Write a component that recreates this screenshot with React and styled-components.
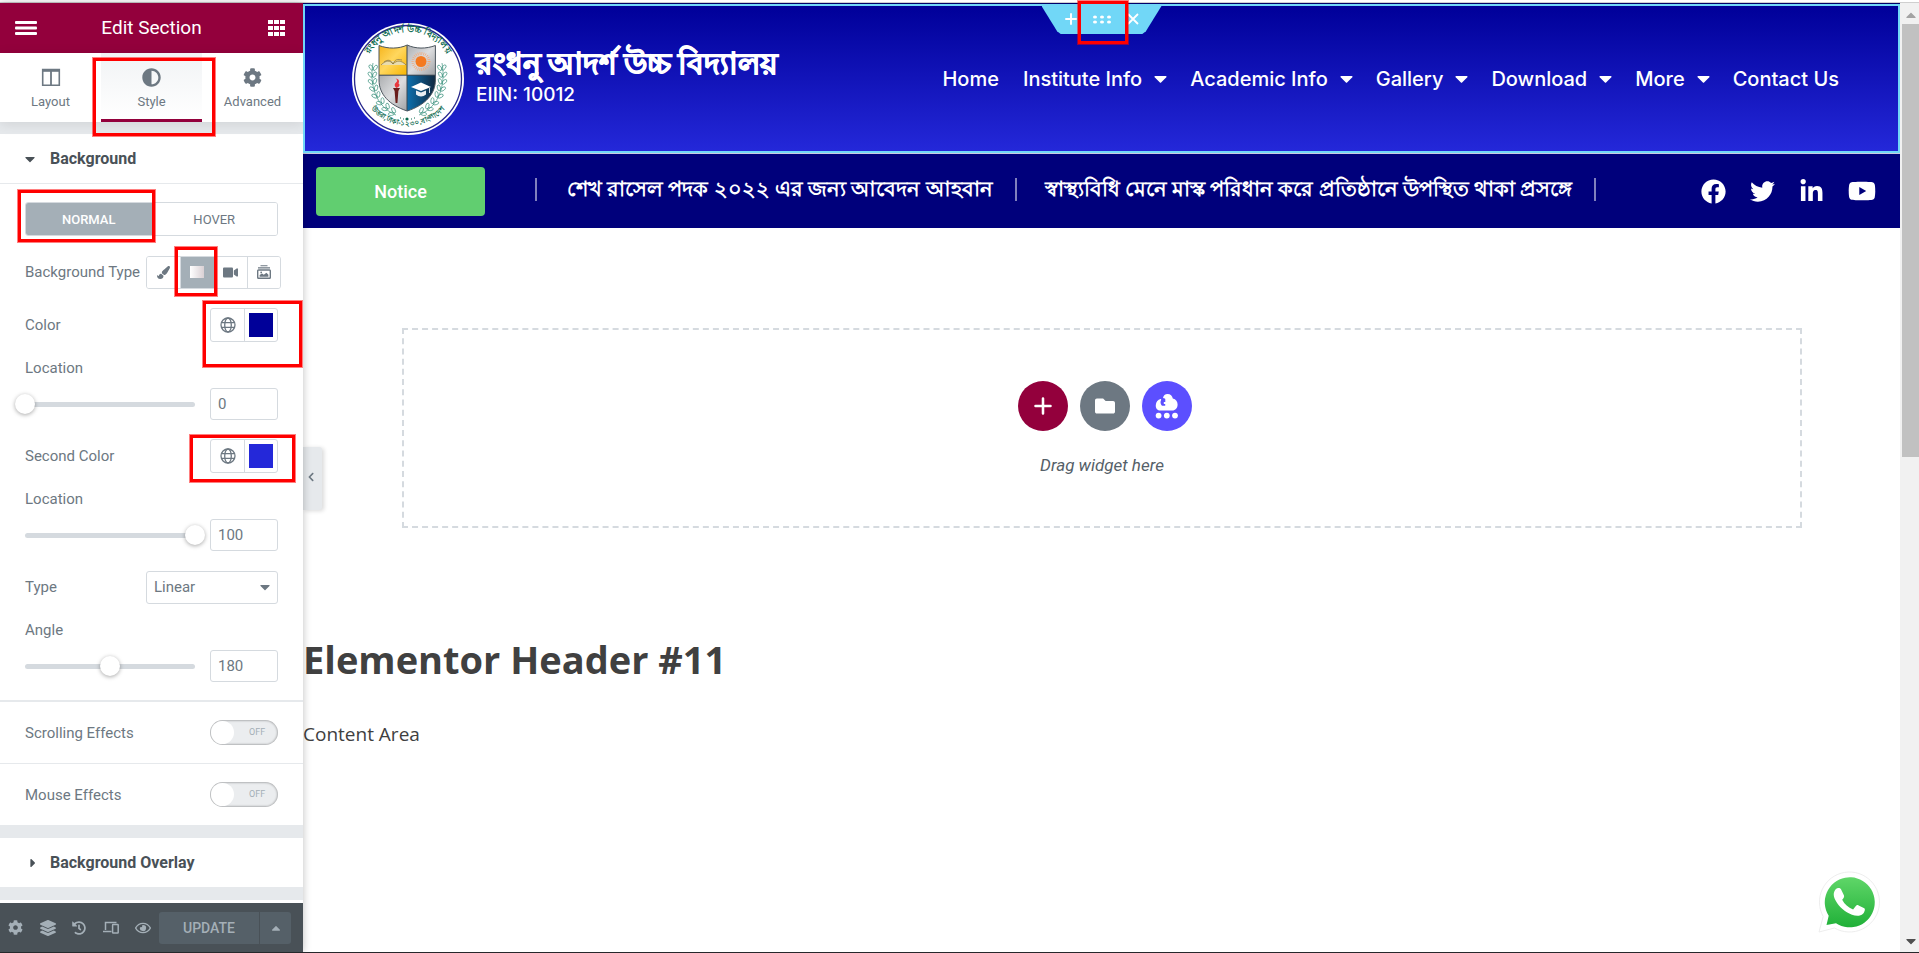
import React, { useState } from 'react'
import styled, { createGlobalStyle } from 'styled-components'
import {
    FaCog, FaAdjust, FaPaintBrush, FaVideo, FaLayerGroup, FaHistory, FaRegEye,
    FaCaretDown, FaCaretUp, FaCaretRight, FaFacebook, FaTwitter, FaLinkedinIn, FaYoutube,
    FaFolder, FaChevronLeft
} from 'react-icons/fa'

const NAV_ITEMS = [
    { label: 'Home' },
    { label: 'Institute Info', menu: true },
    { label: 'Academic Info', menu: true },
    { label: 'Gallery', menu: true },
    { label: 'Download', menu: true },
    { label: 'More', menu: true },
    { label: 'Contact Us' }
]

const HIGHLIGHTS = [
    { x: 93, y: 58, w: 122, h: 78 },
    { x: 18, y: 190, w: 137, h: 52 },
    { x: 175, y: 247, w: 42, h: 49 },
    { x: 203, y: 301, w: 99, h: 66 },
    { x: 190, y: 435, w: 105, h: 47 }
]

const MenuIcon = () => (
    <svg width="22" height="14" viewBox="0 0 22 14" fill="currentColor">
        {[0, 5.5, 11].map(y => <rect key={y} y={y} width="22" height="3" rx="1" />)}
    </svg>
)

const PlusIcon = ({ size, stroke }) => (
    <svg width={size} height={size} viewBox="0 0 12 12" fill="none" stroke="currentColor" strokeWidth={stroke} strokeLinecap="round">
        <path d="M6 1v10M1 6h10" />
    </svg>
)

const CloseIcon = () => (
    <svg width="12" height="12" viewBox="0 0 12 12" fill="none" stroke="currentColor" strokeWidth="1.8">
        <path d="m1 1 10 10M11 1 1 11" />
    </svg>
)

const ColumnsIcon = () => (
    <svg width="20" height="19" viewBox="0 0 20 19" fill="none" stroke="currentColor">
        <path d="M1.7 1.5h16.6v15.8H1.7z" strokeWidth="1.6" />
        <path d="M1 2.4h18" strokeWidth="2.8" />
        <path d="M10 3v14" strokeWidth="1.8" />
    </svg>
)

const AppsIcon = () => (
    <svg width="18" height="16" viewBox="0 0 18 16" fill="currentColor">
        {[0, 6, 12].map(y => [0, 6, 12].map(x => <rect key={x + '-' + y} x={x} y={y} width="5" height="4" />))}
    </svg>
)

const GlobeIcon = () => (
    <svg width="16" height="16" viewBox="0 0 16 16" fill="none" stroke="currentColor" strokeWidth="1.3">
        <circle cx="8" cy="8" r="7" />
        <ellipse cx="8" cy="8" rx="3.3" ry="7" />
        <path d="M1.6 5.6h12.8M1.6 10.4h12.8" />
    </svg>
)

const SlideshowIcon = () => (
    <svg width="14" height="14" viewBox="0 0 14 14" fill="none" stroke="currentColor" strokeWidth="1.4">
        <path d="M3.500.8h7M1 2.900h12" strokeWidth="1.1" />
        <rect x=".7" y="5" width="12.6" height="8.3" rx=".8" />
        <path d="M2.6 11.8V10l2.400-1.5 1.800 1.300 2.600-2 2 2v2z" fill="currentColor" stroke="none" />
        <circle cx="4.2" cy="7.400" r=".9" fill="currentColor" stroke="none" />
    </svg>
)

const DevicesIcon = () => (
    <svg width="16" height="13" viewBox="0 0 16 13" fill="none" stroke="currentColor" strokeWidth="1.5">
        <path d="M2.5 9V1.5h11M0 10.5h8.5" />
        <rect x="9.6" y="3.6" width="5.6" height="8.4" rx=".6" />
    </svg>
)

const CloudIcon = () => (
    <svg width="24" height="26" viewBox="0 0 24 26">
        <path fill="#fff" d="M5 17.5C2.2 17.5.5 15 .8 12 1 9 3 6.5 5.5 6c.6 0 .8.4.6 1C5 9 5.5 11 7 12.8h3.2V11H8.8V9h1.5V6.5c0-1-.8-1.3-2.3-1.5C8.5 2.5 10 1 12.5 1c3 0 4.8 2 5.3 4.5C21 6.2 22.6 8.5 22.6 11.5c0 3.6-2.2 6-5.4 6z" />
        <circle cx="3.6" cy="22.6" r="2.9" fill="#fff" />
        <circle cx="11.8" cy="22.6" r="2.9" fill="#fff" />
        <circle cx="20" cy="22.6" r="2.9" fill="#fff" />
    </svg>
)

const GripIcon = () => (
    <svg width="18" height="9" viewBox="0 0 18 9" fill="currentColor">
        {[2, 9, 16].map(x => [2, 7].map(y => <ellipse key={x + '-' + y} cx={x} cy={y} rx="2" ry="1.6" />))}
    </svg>
)

const WhatsAppIcon = () => (
    <svg width="62" height="62" viewBox="0 0 62 62">
        <defs>
            <linearGradient id="wa" x1="0" y1="0" x2="0" y2="1">
                <stop offset="0" stopColor="#5fd668" />
                <stop offset="1" stopColor="#20b038" />
            </linearGradient>
        </defs>
        <path d="M1 61 5.2 45.5A30 30 0 1 1 16.5 57z" fill="#fff" stroke="#e8e8e8" strokeWidth=".8" />
        <path d="M8.5 54l2.2-9.2A25 25 0 1 1 18 52.2z" fill="url(#wa)" />
        <path d="M17.5 18.5c1.5-1.9 4.5-2 5.5-.3l3 6.3c.5 1.5-.6 2.8-1.8 4.2 2.3 4.5 6 7.9 10.9 9.7l2.9-3.6c.8-.9 1.7-.8 2.6-.4l5.7 2.8c1.3.8.2 4-1.3 5.6-2.9 2.8-7.3 2.4-11 .9-7.3-2.9-12.6-7.3-16.4-14.2-2.3-4-2.6-8-.1-11z" fill="#fff" />
    </svg>
)

const leaves = [[21, 42, 0], [20, 49, -5], [20, 56, -12], [21, 63, -20], [23, 70, -28], [27, 77, -40], [32, 83, -50], [38, 88, -62]]

const Wreath = () => (
    <g fill="none" stroke="#3f9480" strokeWidth=".7">
        <path d="M21 40C17 62 24 84 44 92" />
        {leaves.map(([x, y, r]) => (
            <g key={y} transform={`translate(${x} ${y}) rotate(${r})`}>
                <ellipse cx="-3" cy="1" rx="1.6" ry="3" transform="rotate(-35)" />
                <ellipse cx="3.5" cy="1" rx="1.6" ry="3" transform="rotate(35)" />
            </g>
        ))}
    </g>
)

const SchoolLogo = () => (
    <svg width="112" height="112" viewBox="0 0 112 112">
        <defs>
            <linearGradient id="gold" x1="0" y1="0" x2="1" y2="1">
                <stop offset="0" stopColor="#f5b014" /><stop offset=".5" stopColor="#ffd75e" /><stop offset="1" stopColor="#f7b500" />
            </linearGradient>
            <linearGradient id="steel" x1="0" y1="0" x2="1" y2="1">
                <stop offset="0" stopColor="#a9abae" /><stop offset=".5" stopColor="#dcdddf" /><stop offset="1" stopColor="#9d9fa2" />
            </linearGradient>
            <linearGradient id="ocean" x1="0" y1="0" x2="1" y2="0">
                <stop offset="0" stopColor="#0d6fae" /><stop offset="1" stopColor="#10253a" />
            </linearGradient>
            <clipPath id="shield"><path d="M27 22.5c9 3.5 20 3.5 28.2-.5 8.3 4 19 4 28.2.5V57c0 14-10 25-28.2 31C37 82 27 71 27 57z" /></clipPath>
            <path id="arcTop" d="M14 38A45 45 0 0 1 98 38" />
            <path id="arcBottom" d="M14 79A49 49 0 0 0 98 79" />
        </defs>
        <circle cx="56" cy="56" r="56" fill="#fff" />
        <circle cx="56" cy="56" r="53.5" fill="none" stroke="#27278c" strokeWidth="1.3" />
        <g clipPath="url(#shield)">
            <path d="M26 20h29v32H26z" fill="url(#gold)" />
            <path d="M55 20h30v32H55z" fill="url(#steel)" />
            <path d="M26 52h29v38H26z" fill="url(#steel)" />
            <path d="M55 52h30v38H55z" fill="url(#ocean)" />
            <path d="M55 20v70M26 52.2h60" stroke="#3b4650" strokeWidth="1" />
        </g>
        <path d="M27 22.5c9 3.5 20 3.5 28.2-.5 8.3 4 19 4 28.2.5V57c0 14-10 25-28.2 31C37 82 27 71 27 57z" fill="none" stroke="#4c565e" strokeWidth="1" />
        <path d="M29 42c5-5 9-5 12-1 4-4 8-4 13 1M32 39c4-3 7-2 9 2 2-5 5-5 9-4" fill="#e9dcae" stroke="#85713a" strokeWidth=".7" />
        <circle cx="69" cy="38.5" r="8" fill="none" stroke="#f3a877" strokeWidth="3" strokeDasharray=".7 1.2" />
        <circle cx="69" cy="38.5" r="5.5" fill="#f47920" />
        <path d="M41 65h7l-1.6 3-1 12h-1.8l-1-12z" fill="#6a1d1b" />
        <path d="M44.5 65c-3.5-3-1-5 0-6 1.5-1 0-3-1-3.5 4 .5 4 3 3 5 2 1 1 3.5-2 4.5z" fill="#e8383d" />
        <path d="m59 64 10-4.5L79 64l-10 4z" fill="#fff" />
        <path d="M64 67.5v4c3 2.5 7 2.5 10 0v-4l-5 2z" fill="#e8eef3" />
        <path d="M77.5 65v5" stroke="#fff" strokeWidth=".8" />
        <Wreath />
        <g transform="translate(111 0) scale(-1 1)"><Wreath /></g>
        <circle cx="55" cy="96" r="1.6" fill="#0b6b50" />
        <path d="M48 95h1M51 96h1M59 96h1M62 95h1" stroke="#0b6b50" strokeWidth="1.2" />
        <LogoText $size={9}><textPath href="#arcTop" startOffset="50%">রংধনু আদর্শ উচ্চ বিদ্যালয়</textPath></LogoText>
        <LogoText $size={7}><textPath href="#arcBottom" startOffset="50%">উত্তরা,ঢাকা-১২৩০,বাংলাদেশ</textPath></LogoText>
    </svg>
)

const ColorControl = ({ label, color }) => (
    <ControlRow>
        <span>{label}</span>
        <ColorPicker>
            <PickerButton aria-label={label + ' global'}><GlobeIcon /></PickerButton>
            <PickerButton aria-label={label + ' picker'}><Swatch $color={color} /></PickerButton>
        </ColorPicker>
    </ControlRow>
)

const SliderControl = ({ id, label, max, initial }) => {
    const [value, setValue] = useState(initial)
    let handleChange = (e) => {
        setValue(e.target.value)
    }
    return (
        <SliderBlock>
            <label htmlFor={id}>{label}</label>
            <SliderLine>
                <SliderTrack>
                    <RangeInput type="range" aria-label={label} min={0} max={max} value={value} onChange={handleChange} />
                </SliderTrack>
                <SizeInput id={id} type="text" value={value} onChange={handleChange} />
            </SliderLine>
        </SliderBlock>
    )
}

const SwitchControl = ({ id, label }) => {
    const [on, setOn] = useState(false)
    return (
        <SwitchRow>
            <label htmlFor={id}>{label}</label>
            <Switch>
                <SwitchInput id={id} type="checkbox" checked={on} onChange={() => setOn(!on)} />
                <SwitchText $on={on}>{on ? 'ON' : 'OFF'}</SwitchText>
            </Switch>
        </SwitchRow>
    )
}

const EditorPanel = () => (
    <Panel>
        <PanelHeader>
            <HeaderButton aria-label="Menu"><MenuIcon /></HeaderButton>
            <PanelTitle>Edit Section</PanelTitle>
            <HeaderButton aria-label="Widgets"><AppsIcon /></HeaderButton>
        </PanelHeader>
        <Tabs>
            <Tab><ColumnsIcon />Layout</Tab>
            <Tab $active><FaAdjust size={19} />Style</Tab>
            <Tab><FaCog size={19} />Advanced</Tab>
        </Tabs>
        <PanelContent>
            <SectionTitle $open><FaCaretDown size={16} />Background</SectionTitle>
            <Controls>
                <StateTabs>
                    <StateTab $active>NORMAL</StateTab>
                    <StateTab>HOVER</StateTab>
                </StateTabs>
                <ControlRow>
                    <span>Background Type</span>
                    <Choices>
                        <Choice aria-label="Classic"><FaPaintBrush size={13} /></Choice>
                        <Choice aria-label="Gradient" $active><GradientMark /></Choice>
                        <Choice aria-label="Video"><FaVideo size={15} /></Choice>
                        <Choice aria-label="Slideshow"><SlideshowIcon /></Choice>
                    </Choices>
                </ControlRow>
                <ColorControl label="Color" color="#000099" />
                <SliderControl id="location" label="Location" max={100} initial={0} />
                <ColorControl label="Second Color" color="#2428d9" />
                <SliderControl id="second-location" label="Location" max={100} initial={100} />
                <ControlRow>
                    <label htmlFor="type">Type</label>
                    <SelectBox>
                        <TypeSelect id="type" defaultValue="linear">
                            <option value="linear">Linear</option>
                            <option value="radial">Radial</option>
                        </TypeSelect>
                        <FaCaretDown size={16} />
                    </SelectBox>
                </ControlRow>
                <SliderControl id="angle" label="Angle" max={360} initial={180} />
            </Controls>
            <SwitchControl id="scrolling" label="Scrolling Effects" />
            <SwitchControl id="mouse" label="Mouse Effects" />
            <Divider />
            <SectionTitle><FaCaretRight size={14} />Background Overlay</SectionTitle>
            <Divider />
        </PanelContent>
        <PanelFooter>
            <FooterTools>
                <FooterButton aria-label="Settings"><FaCog size={15} /></FooterButton>
                <FooterButton aria-label="Navigator"><FaLayerGroup size={16} /></FooterButton>
                <FooterButton aria-label="History"><FaHistory size={14} /></FooterButton>
                <FooterButton aria-label="Responsive mode"><DevicesIcon /></FooterButton>
                <FooterButton aria-label="Preview"><FaRegEye size={16} /></FooterButton>
            </FooterTools>
            <UpdateButton>UPDATE</UpdateButton>
            <UpdateMore aria-label="Save options"><FaCaretUp size={14} /></UpdateMore>
        </PanelFooter>
    </Panel>
)

const Preview = () => (
    <Site>
        <SiteHeader>
            <SectionHandle>
                <HandleShape>
                    <HandleButton aria-label="Add section"><PlusIcon size={12} stroke="2" /></HandleButton>
                    <HandleButton aria-label="Edit section"><GripIcon /></HandleButton>
                    <HandleButton aria-label="Remove section"><CloseIcon /></HandleButton>
                </HandleShape>
                <HandleHighlight />
            </SectionHandle>
            <SchoolLogo />
            <SchoolName>
                <strong>রংধনু আদর্শ উচ্চ বিদ্যালয়</strong>
                <span>EIIN: 10012</span>
            </SchoolName>
            <Nav>
                {NAV_ITEMS.map(item => (
                    <NavLink key={item.label} href="#">{item.label}{item.menu && <FaCaretDown size={21} />}</NavLink>
                ))}
            </Nav>
        </SiteHeader>
        <NoticeBar>
            <NoticeButton>Notice</NoticeButton>
            <Ticker>
                <TickerItem>শেখ রাসেল পদক ২০২২ এর জন্য আবেদন আহবান</TickerItem>
                <TickerItem>স্বাস্থ্যবিধি মেনে মাস্ক পরিধান করে প্রতিষ্ঠানে উপস্থিত থাকা প্রসঙ্গে</TickerItem>
            </Ticker>
            <Social>
                <a href="#" aria-label="Facebook"><FaFacebook /></a>
                <a href="#" aria-label="Twitter"><FaTwitter /></a>
                <a href="#" aria-label="LinkedIn"><FaLinkedinIn /></a>
                <a href="#" aria-label="YouTube"><FaYoutube size={28} /></a>
            </Social>
        </NoticeBar>
        <DropArea>
            <DropButtons>
                <RoundButton $color="#93003c" aria-label="Add new section"><PlusIcon size={18} stroke="1.7" /></RoundButton>
                <RoundButton $color="#6d7882" aria-label="Add template"><FaFolder size={20} /></RoundButton>
                <RoundButton $color="#5c4fff" aria-label="Cloud templates"><CloudIcon /></RoundButton>
            </DropButtons>
            <DropText>Drag widget here</DropText>
        </DropArea>
        <PageTitle>Elementor Header #11</PageTitle>
        <ContentArea>Content Area</ContentArea>
        <CollapseButton aria-label="Hide panel"><FaChevronLeft size={10} /></CollapseButton>
        <WhatsApp href="#" aria-label="WhatsApp"><WhatsAppIcon /></WhatsApp>
    </Site>
)

const App = () => (
    <Page>
        <GlobalStyle />
        <Workspace>
            <EditorPanel />
            <Preview />
            <Scrollbar>
                <FaCaretUp size={16} color="#a3a3a3" />
                <ScrollThumb />
                <FaCaretDown size={16} color="#505050" />
            </Scrollbar>
        </Workspace>
        {HIGHLIGHTS.map(box => <Highlight key={box.y} $box={box} />)}
    </Page>
)

const GlobalStyle = createGlobalStyle`
    * {
        box-sizing: border-box;
    }
    body {
        margin: 0;
        background: #fff;
        font-family: Roboto, "Liberation Sans", sans-serif;
    }
    button {
        display: flex;
        align-items: center;
        justify-content: center;
        padding: 0;
        border: none;
        background: none;
        color: inherit;
        font-family: inherit;
        cursor: pointer;
    }
    a {
        color: inherit;
        text-decoration: none;
    }
    svg {
        display: block;
        flex: none;
    }
`
const LogoText = styled.text`
    fill: #0b6b50;
    font-family: "Noto Sans", sans-serif;
    font-size: ${props => props.$size}px;
    font-weight: 700;
    text-anchor: middle;
`
const Page = styled.div`
    position: relative;
    height: 100vh;
    padding-top: 2px;
    border-bottom: 1px solid #26282b;
    overflow: hidden;
`
const Workspace = styled.div`
    display: flex;
    height: 100%;
    border-top: 1px solid #cfcfcf;
`
const Panel = styled.aside`
    position: relative;
    z-index: 1;
    display: flex;
    flex-direction: column;
    flex: none;
    width: 303px;
    background: #fff;
    color: #6d7882;
    font-size: 15px;
    line-height: 20px;
    box-shadow: 0 0 8px rgba(0, 0, 0, 0.25);
`
const PanelHeader = styled.header`
    display: flex;
    align-items: center;
    justify-content: space-between;
    flex: none;
    height: 50px;
    padding: 0 13px;
    background: #93003c;
    color: #fff;
`
const HeaderButton = styled.button`
    width: 25px;
    height: 30px;
`
const PanelTitle = styled.h1`
    margin: 0;
    font-size: 19px;
    font-weight: 400;
`
const Tabs = styled.div`
    display: grid;
    grid-template-columns: repeat(3, 1fr);
    flex: none;
    height: 69px;
    z-index: 1;
    box-shadow: 0 2px 12px rgba(0, 0, 0, 0.1);
`
const Tab = styled.button`
    && {
        flex-direction: column;
        gap: 6px;
        padding-top: 6px;
        border-bottom: 3px solid ${props => props.$active ? '#93003c' : 'transparent'};
        background: ${props => props.$active ? 'linear-gradient(#f1f3f5, #fff)' : '#fff'};
        font-size: 13px;
        line-height: 18px;
    }
`
const PanelContent = styled.div`
    flex: 1;
    min-height: 0;
    padding-top: 12px;
    background: linear-gradient(#e6e9ec 50%, #fff 50%);
    overflow: hidden;
`
const SectionTitle = styled.h2`
    display: flex;
    align-items: center;
    gap: ${props => props.$open ? '12px' : '10px'};
    height: ${props => props.$open ? '50px' : '49px'};
    margin: 0;
    padding-left: ${props => props.$open ? '22px' : '26px'};
    border-bottom: ${props => props.$open ? '1px solid #e6e9ec' : 'none'};
    background: #fff;
    color: #495157;
    font-size: 16px;
    font-weight: 700;
`
const Controls = styled.div`
    display: flex;
    flex-direction: column;
    padding: 18px 25px;
    border-bottom: 2px solid #e6e9ec;
    background: #fff;
`
const StateTabs = styled.div`
    display: grid;
    grid-template-columns: 1fr 1fr;
    height: 34px;
    border: 1px solid #d5dadf;
    border-radius: 3px;
    overflow: hidden;
`
const StateTab = styled.button`
    && {
        background: ${props => props.$active ? '#a4afb7' : '#fff'};
        color: ${props => props.$active ? '#fff' : '#6d7882'};
        font-size: 13px;
        font-weight: ${props => props.$active ? 500 : 400};
    }
`
const ControlRow = styled.div`
    display: flex;
    align-items: center;
    justify-content: space-between;
    height: 34px;
    margin-top: 19px;
    white-space: nowrap;
`
const Choices = styled.div`
    display: grid;
    grid-template-columns: repeat(4, 1fr);
    flex: none;
    width: 135px;
    height: 33px;
    margin-right: -3px;
    border: 1px solid #d5dadf;
    border-radius: 3px;
    overflow: hidden;
`
const Choice = styled.button`
    && {
        background: ${props => props.$active ? '#a4afb7' : '#fff'};
        border-left: 1px solid #d5dadf;
    }
    &&:first-child {
        border-left: none;
    }
`
const GradientMark = styled.span`
    width: 14px;
    height: 12px;
    background: linear-gradient(90deg, #fff, #d9d0d4);
`
const ColorPicker = styled.div`
    display: grid;
    grid-template-columns: 1fr 1fr;
    width: 68px;
    height: 34px;
    border: 1px solid #d5dadf;
    border-radius: 3px;
`
const PickerButton = styled.button`
    & + && {
        border-left: 1px solid #d5dadf;
    }
`
const Swatch = styled.span`
    width: 24px;
    height: 24px;
    background: ${props => props.$color};
`
const SliderBlock = styled.div`
    display: flex;
    flex-direction: column;
    gap: 10px;
    margin-top: 16px;
`
const SliderLine = styled.div`
    display: flex;
    align-items: center;
    gap: 15px;
`
const SliderTrack = styled.div`
    display: flex;
    align-items: center;
    flex: 1;
    height: 5px;
    border-radius: 5px;
    background: #d5dadf;
`
const RangeInput = styled.input`
    flex: none;
    width: calc(100% + 20px);
    height: 20px;
    margin: 0 -10px;
    background: transparent;
    appearance: none;
    outline: none;

    &::-webkit-slider-thumb {
        width: 20px;
        height: 20px;
        border-radius: 50%;
        background: #fff;
        box-shadow: 0 1px 4px rgba(0, 0, 0, 0.35);
        appearance: none;
    }
`
const SizeInput = styled.input`
    width: 68px;
    height: 32px;
    padding: 0 7px;
    border: 1px solid #d5dadf;
    border-radius: 3px;
    outline: none;
    color: #6d7882;
    font-family: inherit;
    font-size: 15px;
`
const SelectBox = styled.div`
    position: relative;
    width: 132px;

    svg {
        position: absolute;
        top: 8px;
        right: 5px;
        pointer-events: none;
    }
`
const TypeSelect = styled.select`
    display: block;
    width: 100%;
    height: 33px;
    padding: 0 7px;
    border: 1px solid #d5dadf;
    border-radius: 3px;
    outline: none;
    background: #fff;
    color: #6d7882;
    font-family: inherit;
    font-size: 15px;
    appearance: none;
`
const SwitchRow = styled.div`
    display: flex;
    align-items: center;
    justify-content: space-between;
    height: 61px;
    padding: 0 25px;
    background: #fff;

    & + & {
        height: 62px;
        border-top: 1px solid #e6e9ec;
    }
`
const Switch = styled.div`
    position: relative;
    width: 68px;
    height: 25px;
`
const SwitchInput = styled.input`
    display: block;
    width: 100%;
    height: 100%;
    margin: 0;
    padding: 1px;
    border-radius: 13px;
    background: #ebedef;
    box-shadow: inset 0 0 2px 1px rgba(0, 0, 0, 0.25);
    appearance: none;

    &::before {
        content: '';
        display: block;
        width: 23px;
        height: 23px;
        border-radius: 50%;
        background: #fff;
    }
    &:checked::before {
        margin-left: 43px;
    }
`
const SwitchText = styled.span`
    position: absolute;
    top: 2px;
    left: ${props => props.$on ? '12px' : '39px'};
    color: #a4afb7;
    font-size: 9px;
    pointer-events: none;
`
const Divider = styled.div`
    height: 13px;
    background: #e6e9ec;
`
const PanelFooter = styled.footer`
    display: flex;
    align-items: center;
    flex: none;
    height: 49px;
    padding-right: 12px;
    background: #495157;
    color: #a4afb7;
`
const FooterTools = styled.div`
    display: grid;
    grid-template-columns: repeat(5, 1fr);
    flex: 1;
`
const FooterButton = styled.button`
    height: 32px;
`
const UpdateButton = styled.button`
    && {
        width: 100px;
        height: 32px;
        border-radius: 3px 0 0 3px;
        background: #556068;
        font-size: 14px;
        font-weight: 500;
    }
`
const UpdateMore = styled.button`
    && {
        width: 31px;
        height: 32px;
        margin-left: 1px;
        border-radius: 0 3px 3px 0;
        background: #556068;
    }
`
const Site = styled.main`
    position: relative;
    flex: 1;
    min-width: 0;
    border-top: 1px solid #00006b;
    color: #404040;
`
const SiteHeader = styled.header`
    position: relative;
    z-index: 2;
    display: flex;
    align-items: center;
    height: 149px;
    padding: 0 59px 0 47px;
    border: 2px solid #71d7f7;
    background: linear-gradient(#000099, #2428d9);
    color: #fff;
    font-family: Inter, sans-serif;
`
const SectionHandle = styled.div`
    position: absolute;
    top: 0;
    left: 50%;
    width: 120px;
    margin-left: -60px;
`
const HandleShape = styled.div`
    display: flex;
    align-items: center;
    justify-content: center;
    height: 28px;
    padding-bottom: 2px;
    background: #71d7f7;
    clip-path: polygon(0 0, 100% 0, 87% 90%, 84% 100%, 16% 100%, 13% 90%);
`
const HandleButton = styled.button`
    width: 31px;
    height: 24px;
`
const HandleHighlight = styled.div`
    position: absolute;
    top: -5px;
    left: 36px;
    width: 50px;
    height: 43px;
    border: 3px solid #f00;
    box-shadow: 0 0 0 1px rgba(255, 0, 0, 0.5);
`
const SchoolName = styled.div`
    display: flex;
    flex-direction: column;
    margin-left: 12px;
    padding-bottom: 8px;
    white-space: nowrap;

    strong {
        font-size: 30px;
        line-height: 40px;
        -webkit-text-stroke: 1px #fff;
    }
    span {
        font-size: 19px;
        font-weight: 500;
        line-height: 24px;
    }
`
const Nav = styled.nav`
    display: flex;
    gap: 24px;
    margin-left: auto;
`
const NavLink = styled.a`
    display: flex;
    align-items: center;
    gap: 8px;
    font-size: 20px;
    font-weight: 500;
    white-space: nowrap;

    svg {
        margin-right: -5px;
    }
`
const NoticeBar = styled.div`
    display: flex;
    align-items: center;
    height: 75px;
    padding: 0 24px 0 13px;
    border-top: 1px solid #c9cbe0;
    background: #00007b;
    color: #fff;
`
const NoticeButton = styled.button`
    && {
        flex: none;
        width: 169px;
        height: 49px;
        border-radius: 4px;
        background: #61ce70;
        font-size: 18px;
        font-weight: 500;
    }
`
const Ticker = styled.div`
    display: flex;
    align-items: center;
    flex: 1;
    min-width: 0;
    margin: 0 40px 0 50px;
    padding-bottom: 4px;
    overflow: hidden;
`
const TickerItem = styled.span`
    display: flex;
    align-items: center;
    font-size: 21px;
    font-weight: 700;
    line-height: 30px;
    white-space: nowrap;

    &::after {
        content: '';
        width: 2px;
        height: 23px;
        margin: 0 28px 0 22px;
        background: #8080bd;
    }
    &:first-child::before {
        content: '';
        width: 2px;
        height: 23px;
        margin-right: 30px;
        background: #8080bd;
    }
`
const Social = styled.div`
    display: flex;
    align-items: center;
    gap: 24px;
    font-size: 25px;
`
const DropArea = styled.section`
    display: flex;
    flex-direction: column;
    align-items: center;
    height: 200px;
    margin: 100px 98px 0 99px;
    padding-top: 51px;
    border: 2px dashed #d5dadf;
`
const DropButtons = styled.div`
    display: flex;
    gap: 12px;
    padding-left: 5px;
`
const RoundButton = styled.button`
    && {
        width: 50px;
        height: 50px;
        border-radius: 50%;
        background: ${props => props.$color};
        color: #fff;
    }
`
const DropText = styled.p`
    margin: 24px 0 0;
    color: #556068;
    font-size: 17px;
    font-style: italic;
    line-height: 20px;
`
const PageTitle = styled.h2`
    margin: 103px 0 0;
    font-family: "Open Sans", sans-serif;
    font-size: 38px;
    font-weight: 700;
    line-height: 56px;
`
const ContentArea = styled.p`
    margin: 32px 0 0;
    font-family: "Open Sans", sans-serif;
    font-size: 19px;
    line-height: 30px;
`
const CollapseButton = styled.button`
    && {
        position: absolute;
        top: 443px;
        left: 0;
        width: 19px;
        height: 63px;
        padding: 0 3px 4px 0;
        border-radius: 0 3px 3px 0;
        background: #e6e9ec;
        color: #6d7882;
        box-shadow: 2px 1px 4px rgba(0, 0, 0, 0.15);
    }
`
const WhatsApp = styled.a`
    position: absolute;
    right: 20px;
    bottom: 19px;
`
const Scrollbar = styled.div`
    display: flex;
    flex-direction: column;
    align-items: center;
    justify-content: space-between;
    flex: none;
    width: 19px;
    padding: 4px 0 3px 2px;
    background: #f1f1f1;
`
const ScrollThumb = styled.div`
    width: 100%;
    height: 46%;
    margin: 1px 0 auto;
    background: #c1c1c1;
`
const Highlight = styled.div`
    position: absolute;
    left: ${props => props.$box.x}px;
    top: ${props => props.$box.y}px;
    width: ${props => props.$box.w}px;
    height: ${props => props.$box.h}px;
    border: 3px solid #f00;
    box-shadow: 0 0 0 1px rgba(255, 0, 0, 0.5);
    z-index: 2;
    pointer-events: none;
`

export default App
